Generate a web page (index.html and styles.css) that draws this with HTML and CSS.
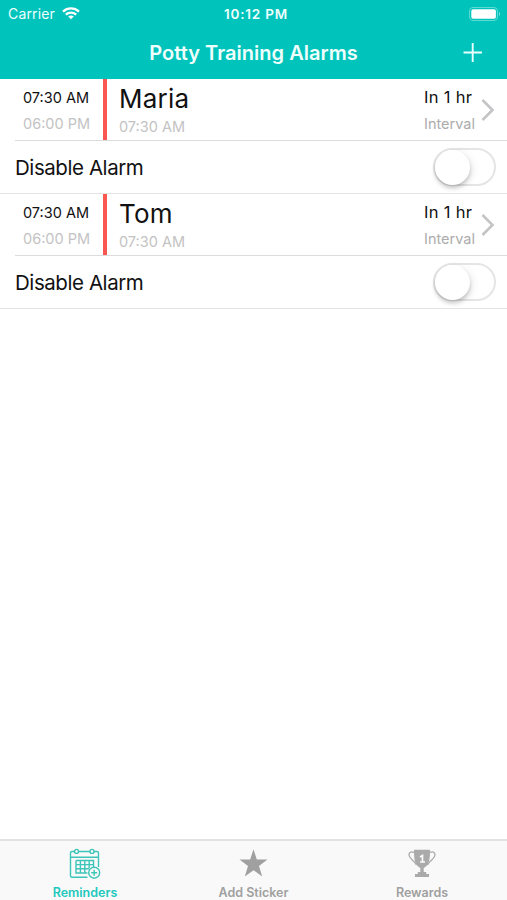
FILE: index.html
```
<!DOCTYPE html>
<html lang="en">
<head>
<meta charset="utf-8">
<title>Potty Training Alarms</title>
<link rel="stylesheet" href="styles.css">
</head>
<body>
<header class="header">
  <div class="status">
    <div class="carrier"><span>Carrier</span>
      <svg width="18" height="13" viewBox="0 0 18 13" fill="none" stroke="#fff" stroke-width="2.2"><path d="M1 4.6C5.5.4 12.500.4 17 4.600M3.800 7.600C6.700 4.900 11.300 4.900 14.200 7.600"/><path d="M9 12.300L6.200 9.600Q9 7.400 11.800 9.600Z" fill="#fff" stroke="none"/></svg>
    </div>
    <span class="clock">10:12 PM</span>
    <svg class="battery" width="32" height="14" viewBox="0 0 32 14"><rect x=".5" y=".5" width="28" height="13" rx="3.500" fill="none" stroke="#5fd9d4"/><rect x="2.300" y="2.300" width="24.600" height="9.400" rx="1.800" fill="#fff"/><path d="M30 5Q32.300 7 30 9Z" fill="#7fe1dd"/></svg>
  </div>
  <div class="nav">
    <h1>Potty Training Alarms</h1>
    <svg class="add" width="20" height="20" viewBox="0 0 20 20" stroke="#eafffd" stroke-width="1.900"><path d="M.5 9.500H19M9.700 0V19"/></svg>
  </div>
</header>
<main>
  <section class="group">
    <div class="alarm">
      <div class="times"><span class="start">07:30 AM</span><span class="end">06:00 PM</span></div>
      <div class="who"><span class="name">Maria</span><span class="next">07:30 AM</span></div>
      <div class="when"><span class="in">In 1 hr</span><span class="kind">Interval</span></div>
      <svg class="chevron" width="14" height="24" viewBox="0 0 14 24" fill="none" stroke="#c4c4c6" stroke-width="2.600"><path d="M1.500 2L11.500 12L1.500 22"/></svg>
    </div>
    <div class="setting"><span>Disable Alarm</span><div class="switch"><div class="knob"></div></div></div>
  </section>
  <section class="group">
    <div class="alarm">
      <div class="times"><span class="start">07:30 AM</span><span class="end">06:00 PM</span></div>
      <div class="who"><span class="name">Tom</span><span class="next">07:30 AM</span></div>
      <div class="when"><span class="in">In 1 hr</span><span class="kind">Interval</span></div>
      <svg class="chevron" width="14" height="24" viewBox="0 0 14 24" fill="none" stroke="#c4c4c6" stroke-width="2.600"><path d="M1.500 2L11.500 12L1.500 22"/></svg>
    </div>
    <div class="setting"><span>Disable Alarm</span><div class="switch"><div class="knob"></div></div></div>
  </section>
</main>
<nav class="tabs">
  <div class="tab active">
    <svg width="32" height="32" viewBox="0 0 32 32" fill="none" stroke="#3cc5b8" stroke-width="1.400"><path d="M18.500 29.200H3Q1.500 29.200 1.500 27.700V5Q1.500 3.500 3 3.500H5.500M9.500 3.500H21M25 3.500H28Q29.500 3.500 29.500 5V19M1.500 9.300H29.500"/><circle cx="7.500" cy="3.400" r="2"/><circle cx="23" cy="3.400" r="2"/><path d="M7 12.500H24.500V20M7 12.500V25H18.500M7 16.600H24.500M7 20.800H20M11.400 12.500V25M15.800 12.500V25M20.200 12.500V20"/><circle cx="25.200" cy="24.700" r="5.500"/><path d="M22.200 24.700H28.200M25.200 21.700V27.700"/></svg>
    <span>Reminders</span>
  </div>
  <div class="tab">
    <svg width="32" height="32" viewBox="0 0 32 32" fill="#a0a0a0"><path d="M15.500 1.200L18.800 11.500L29.500 11.600L21 18.100L24.200 28.500L15.500 22.200L6.800 28.500L10 18.100L1.500 11.600L12.200 11.500Z"/></svg>
    <span>Add Sticker</span>
  </div>
  <div class="tab">
    <svg width="32" height="32" viewBox="0 0 32 32"><path d="M8 1.800H24C24 11 23.500 17 17.700 20V24H20.200V26H23V29H9V26H11.800V24H14.300V20C8.500 17 8 11 8 1.800Z" fill="#aaa"/><path d="M8.500 4.800C5.500 3 3 4 3 6.800C3 11 7.500 11.500 10.500 17M23.500 4.800C26.500 3 29 4 29 6.800C29 11 24.500 11.500 21.500 17" fill="none" stroke="#aaa" stroke-width="1.300"/><path d="M14 9L16.500 7.500V14M14 14H19" fill="none" stroke="#fafafa" stroke-width="1.700"/></svg>
    <span>Rewards</span>
  </div>
</nav>
</body>
</html>
```
FILE: styles.css
```
* { box-sizing: border-box; }
body { margin: 0; height: 900px; display: flex; flex-direction: column; background: #fff; font-family: Inter, "Liberation Sans", sans-serif; color: #111; overflow: hidden; }
svg { display: block; flex: none; }
span, h1 { white-space: nowrap; }
.header { height: 79px; background: #00c4bc; color: #effffd; }
.status { height: 27px; display: grid; grid-template-columns: 1fr auto 1fr; align-items: center; padding: 0 6px 0 8px; font-size: 14px; }
.carrier { display: flex; align-items: center; gap: 7px; letter-spacing: .15px; }
.clock { font-weight: 600; font-size: 13.500px; letter-spacing: .8px; margin-left: 3px; }
.battery { justify-self: end; }
.nav { height: 52px; display: grid; grid-template-columns: 1fr auto 1fr; align-items: center; padding: 0 24px; }
h1 { grid-column: 2; margin: 0; font-size: 20px; line-height: 24px; font-weight: 600; letter-spacing: .03px; }
.add { justify-self: end; }
main { flex: 1; }
.group { height: 115px; }
.alarm { height: 62px; margin-left: 15px; border-bottom: 1px solid #dcdcdc; display: flex; padding-right: 12px; }
.times { width: 92px; border-right: 4px solid #fa5652; padding: 8px 0 0 8px; display: flex; flex-direction: column; }
.start, .end, .next, .kind { font-size: 14.500px; line-height: 20px; }
.start { line-height: 21px; }
.end { margin-top: 6px; color: #c3c3c3; }
.who { flex: 1; padding: 3px 0 0 12px; display: flex; flex-direction: column; }
.name { font-size: 26px; line-height: 34px; letter-spacing: .2px; }
.next { color: #c3c3c3; margin-top: 1px; }
.when { width: 58px; padding: 8px 0 0 1px; display: flex; flex-direction: column; }
.in { font-size: 16.500px; line-height: 20px; letter-spacing: .3px; }
.kind { color: #acacac; margin-top: 7px; }
.chevron { margin-top: 19px; }
.setting { height: 53px; border-bottom: 1px solid #e4e4e4; display: flex; align-items: center; justify-content: space-between; padding: 0 11px 0 15px; font-size: 20.500px; letter-spacing: -.43px; }
.switch { width: 63px; height: 38px; border: 2px solid #e5e5e5; border-radius: 19px; }
.knob { width: 35px; height: 35px; border-radius: 50%; background: #fff; box-shadow: 0 3px 4px rgba(0,0,0,.2), 3px 2px 9px rgba(0,0,0,.07); }
.tabs { height: 61px; border-top: 2px solid #e2e2e2; background: #f9f9f9; display: grid; grid-template-columns: 170px 167px 170px; }
.tab { display: flex; flex-direction: column; align-items: center; padding-top: 7px; color: #a0a0a0; font-size: 12.500px; line-height: 16px; font-weight: 600; }
.tab span { margin-top: 5px; }
.active { color: #22c8be; }
```
